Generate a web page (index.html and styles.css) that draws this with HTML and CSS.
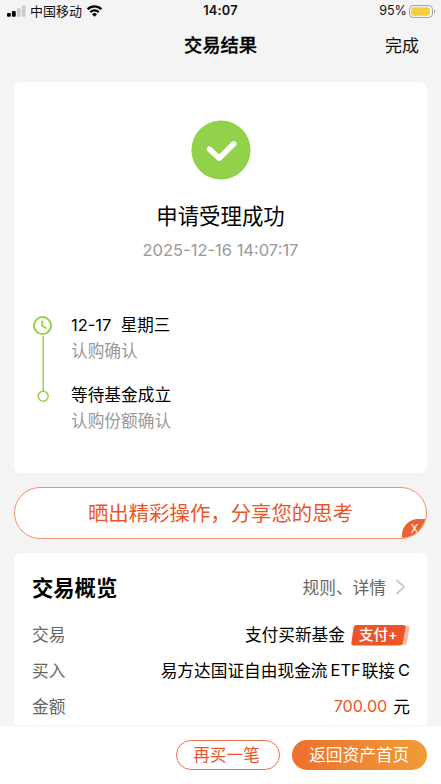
FILE: index.html
```html
<!DOCTYPE html>
<html lang="zh-CN">
  <head>
    <meta charset="UTF-8" />
    <meta name="viewport" content="width=device-width, initial-scale=1.0" />
    <title>交易结果</title>
    <link rel="stylesheet" href="styles.css">
  </head>
  <body>
    <div class="page">
      <div class="status-bar">
        <div class="carrier">
          <svg class="signal" width="19" height="12" viewBox="0 0 19 12">
            <rect x="0" y="8" width="3.8" height="3.8" rx="1" />
            <rect x="4.9" y="6" width="3.8" height="5.8" rx="1" />
            <rect class="off" x="9.9" y="3.2" width="3.8" height="8.6" rx="1" />
            <rect class="off" x="14.8" y="0.6" width="3.8" height="11.2" rx="1" />
          </svg>
          <span>中国移动</span>
          <svg class="wifi" width="17" height="12" viewBox="0 0 16 12">
            <path d="M1.1 4.3a9.8 9.8 0 0 1 13.8 0M3.8 7.1a6 6 0 0 1 8.4 0" />
            <path class="dot" d="M8 11.8L5.5 9.2a3.5 3.5 0 0 1 5 0z" />
          </svg>
        </div>
        <div class="time">14:07</div>
        <div class="battery">
          <span>95%</span>
          <svg width="27" height="13" viewBox="0 0 27 13">
            <rect x="0.6" y="0.6" width="22.8" height="11.8" rx="3.5" fill="#fff" stroke="#999" />
            <rect x="2.3" y="2.3" width="18.6" height="8.4" rx="1.8" fill="#f6cc45" />
            <path d="M25 4.4c1.6.8 1.6 3.4 0 4.2z" fill="#999" />
          </svg>
        </div>
      </div>

      <div class="nav">
        <h1>交易结果</h1>
        <a class="done">完成</a>
      </div>

      <div class="card result">
        <svg class="success" width="60" height="60" viewBox="0 0 60 60">
          <circle cx="30" cy="30" r="29.6" />
          <path d="M18.5 29.2L28.2 38.2L42.8 23.8" />
        </svg>
        <div class="result-title">申请受理成功</div>
        <div class="result-time">2025-12-16 14:07:17</div>

        <div class="timeline">
          <svg class="track" width="20" height="90" viewBox="0 0 20 90">
            <path class="line" d="M10.2 19.5V75" />
            <circle class="clock" cx="9.5" cy="9.6" r="8.5" />
            <path class="hands" d="M9.2 5.2V10L13 12" />
            <circle class="node" cx="10.2" cy="80.2" r="5" />
          </svg>
          <div class="steps">
            <div class="step">
              <div class="step-title date">12-17&nbsp; 星期三</div>
              <div class="step-text">认购确认</div>
            </div>
            <div class="step">
              <div class="step-title">等待基金成立</div>
              <div class="step-text">认购份额确认</div>
            </div>
          </div>
        </div>
      </div>

      <div class="share">
        <span>晒出精彩操作，分享您的思考</span>
        <div class="close">X</div>
      </div>

      <div class="card overview">
        <div class="overview-head">
          <h2>交易概览</h2>
          <a class="rules">
            规则、详情
            <svg width="11" height="16" viewBox="0 0 11 16">
              <path d="M1.5 1L9 8L1.5 15" />
            </svg>
          </a>
        </div>
        <div class="row">
          <span class="label">交易</span>
          <span class="value">支付买新基金<span class="tag"><svg width="59" height="21" viewBox="0 0 59 21">
                <path d="M50 0.5H56.5Q58.8 0.5 58.5 3L56 17.5Q55.5 20 53 20H48z" fill="#f7b9a0" />
                <path d="M5.5 0H52Q55 0 54.5 3L51.8 17.5Q51.3 20.4 48.5 20.4H2.5Q0 20.4 0.4 17.5L2.5 3Q3 0 5.5 0z" fill="#ec552a" />
              </svg><b>支付+</b></span></span>
        </div>
        <div class="row">
          <span class="label">买入</span>
          <span class="value fund">易方达国证自由现金流<i>ETF</i>联接<i>C</i></span>
        </div>
        <div class="row">
          <span class="label">金额</span>
          <span class="value"><span class="amount">700.00</span>元</span>
        </div>
      </div>

      <div class="footer">
        <button class="btn again">再买一笔</button>
        <button class="btn home">返回资产首页</button>
      </div>
    </div>
  </body>
</html>
```
FILE: styles.css
```css
* {
  box-sizing: border-box;
}

body {
  margin: 0;
  background-color: #f4f4f4;
  color: #111;
  font-family: Inter, "Noto Sans CJK SC", sans-serif;
  font-size: 16.7px;
}

.page {
  display: flex;
  flex-direction: column;
  height: 784px;
  overflow: hidden;
}

.status-bar {
  display: grid;
  grid-template-columns: 1fr auto 1fr;
  align-items: center;
  flex: none;
  height: 22px;
  padding: 0 5px 0 7px;
  font-size: 13px;
  line-height: 22px;
}

.carrier,
.battery {
  display: flex;
  align-items: center;
}

.carrier {
  gap: 4px;
}

.battery {
  justify-content: flex-end;
  gap: 2px;
  font-size: 12.6px;
}

.time {
  margin-right: 2px;
  font-size: 12.8px;
  font-weight: 600;
  letter-spacing: 0.2px;
}

.signal .off {
  fill: #ccc;
}

.wifi {
  fill: none;
  stroke: #000;
  stroke-width: 2.3;
}

.wifi .dot {
  fill: #000;
  stroke: none;
}

.nav {
  display: grid;
  grid-template-columns: 1fr auto 1fr;
  align-items: center;
  flex: none;
  height: 44px;
  margin-bottom: 16px;
  padding-right: 22px;
}

.nav h1 {
  grid-column: 2;
  margin: 0 0 0 22px;
  color: #000;
  font-size: 18.3px;
  font-weight: 500;
  -webkit-text-stroke: 0.3px;
}

.done {
  justify-self: end;
  font-size: 17px;
}

.card {
  flex: none;
  margin: 0 14px;
  background-color: #fff;
  border-radius: 7px;
}

.result {
  display: flex;
  flex-direction: column;
  align-items: center;
  height: 391px;
  padding-top: 38px;
}

.success circle {
  fill: #92d14a;
}

.success path {
  fill: none;
  stroke: #fff;
  stroke-width: 5.5;
  stroke-linecap: round;
  stroke-linejoin: round;
}

.result-title {
  margin-top: 18px;
  color: #000;
  font-size: 21.4px;
  line-height: 36px;
}

.result-time {
  margin-top: 3px;
  color: #999;
  font-size: 16.5px;
  line-height: 26px;
}

.timeline {
  display: flex;
  align-self: stretch;
  gap: 18px;
  margin-top: 49px;
  padding-left: 19px;
}

.track {
  margin-top: 4px;
  fill: none;
  stroke: #92d14a;
  stroke-width: 1.5;
}

.clock {
  stroke-width: 2;
}

.hands {
  stroke-width: 1.8;
  stroke-linecap: round;
}

.step {
  margin-bottom: 18px;
  line-height: 26px;
}

.step-title {
  color: #000;
}

.date {
  font-size: 16.5px;
}

.step-text {
  color: #999;
}

.share {
  position: relative;
  flex: none;
  height: 52px;
  margin: 14px;
  overflow: hidden;
  background-color: #fff;
  border: 1px solid #f0936f;
  border-radius: 26px;
  color: #ec552a;
  font-size: 20.4px;
  line-height: 52px;
  text-align: center;
}

.close {
  position: absolute;
  right: -1px;
  bottom: -1px;
  width: 25px;
  height: 20px;
  background-color: #e96432;
  border-top-left-radius: 16px;
  color: #fff;
  font-family: "Noto Sans", sans-serif;
  font-size: 12px;
  line-height: 20px;
}

.overview {
  height: 240px;
  padding: 16px 17px 0 18px;
}

.overview-head {
  display: flex;
  align-items: center;
  justify-content: space-between;
  height: 34px;
  margin-bottom: 13px;
}

.overview h2 {
  margin: 0;
  color: #000;
  font-size: 21.3px;
  font-weight: 700;
}

.rules {
  display: flex;
  align-items: center;
  gap: 9px;
  margin: 2px 4px 0 0;
  color: #666;
}

.rules path {
  fill: none;
  stroke: #c9c9c9;
  stroke-width: 1.8;
}

.row {
  display: flex;
  align-items: center;
  justify-content: space-between;
  height: 36px;
}

.label {
  color: #666;
}

.value {
  display: flex;
  align-items: center;
  color: #000;
}

.tag {
  display: grid;
  margin: 2px 0 0 6px;
}

.tag svg,
.tag b {
  grid-area: 1 / 1;
}

.tag b {
  padding-left: 8px;
  color: #fff;
  font-size: 14.5px;
  font-weight: 500;
  line-height: 20px;
}

.fund i {
  margin: 0 1px 0 3px;
  font-size: 16.4px;
  font-style: normal;
}

.fund i:last-child {
  margin-right: 0;
}

.amount {
  margin-right: 6px;
  color: #ec552a;
  font-size: 16.2px;
}

.footer {
  position: fixed;
  right: 0;
  bottom: 0;
  left: 0;
  display: flex;
  justify-content: flex-end;
  gap: 12px;
  height: 59px;
  padding: 14px 14px 0 0;
  background-color: #fff;
  border-top: 1px solid #f4f4f4;
}

.btn {
  height: 30px;
  padding: 0;
  border: none;
  border-radius: 15px;
  font-family: inherit;
  font-size: 16.7px;
  line-height: 28px;
}

.again {
  width: 104px;
  padding-right: 2px;
  background-color: #fff;
  border: 1px solid #ee7450;
  color: #ec552a;
}

.home {
  width: 135.5px;
  background: linear-gradient(to right, #ed702e, #f19c38);
  color: #fff;
}
```
